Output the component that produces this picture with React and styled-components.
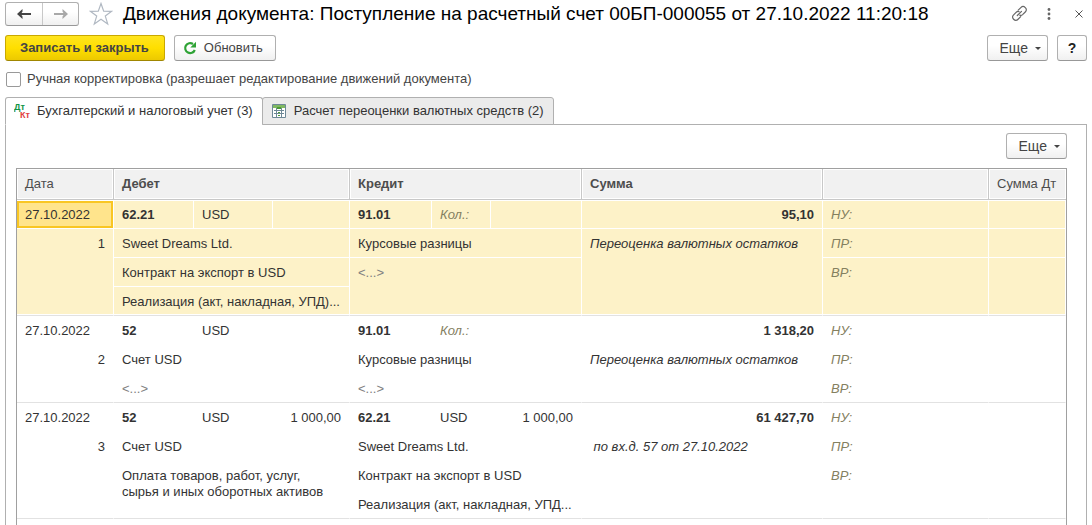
import React, { useState } from "react";
import styled, { createGlobalStyle, css } from "styled-components";

const entries = [
  {
    date: "27.10.2022",
    rows: 4,
    debit: { account: "62.21", unit: "USD", lines: ["Sweet Dreams Ltd.", "Контракт на экспорт в USD", "Реализация (акт, накладная, УПД)..."] },
    credit: { account: "91.01", lines: ["Курсовые разницы", "<...>"] },
    sum: "95,10",
    comment: "Переоценка валютных остатков",
  },
  {
    date: "27.10.2022",
    rows: 3,
    debit: { account: "52", unit: "USD", lines: ["Счет USD", "<...>"] },
    credit: { account: "91.01", lines: ["Курсовые разницы", "<...>"] },
    sum: "1 318,20",
    comment: "Переоценка валютных остатков",
  },
  {
    date: "27.10.2022",
    rows: 4,
    debit: { account: "52", unit: "USD", amount: "1 000,00", lines: ["Счет USD", "Оплата товаров, работ, услуг,\nсырья и иных оборотных активов"] },
    credit: { account: "62.21", unit: "USD", amount: "1 000,00", lines: ["Sweet Dreams Ltd.", "Контракт на экспорт в USD", "Реализация (акт, накладная, УПД..."] },
    sum: "61 427,70",
    comment: "\u00a0по вх.д. 57 от 27.10.2022",
  },
];

const taxLines = ["ПР:", "ВР:"];

// the last line of a list takes all the rows that are left
const spanOf = (lines, index, rows) =>
  index === lines.length - 1 ? rows - 1 - index : 1;

const ArrowIcon = ({ back }) => (
  <svg width="14" height="10" viewBox="0 0 14 10" fill="currentColor">
    {back ? <path d="M0 5L5.500 0v2.500L4.500 4H14v2H4.500l1 1.500V10z" /> : <path d="M14 5L8.500 0v2.500l1 1.500H0v2h9.500l-1 1.500V10z" />}
  </svg>
);

const StarIcon = () => (
  <svg width="24" height="24" viewBox="0 0 24 24" fill="none" stroke="#b0b8c2" strokeWidth="1.200">
    <path d="M12 1.500l2.700 7.600 8 .2-6.400 4.800 2.400 7.800L12 17.200l-6.700 4.700 2.400-7.800L1.300 9.300l8-.2z" />
  </svg>
);

const RefreshIcon = () => (
  <svg width="14" height="14" viewBox="0 0 14 14" fill="none">
    <path d="M10 3A5 5 0 1 0 11.800 9" stroke="#2fa336" strokeWidth="2.200" />
    <path d="M13 .8v5.700H7.300z" fill="#2fa336" />
  </svg>
);

const PostingIcon = () => (
  <svg width="18" height="16" viewBox="0 0 18 16" fontFamily="Liberation Sans, sans-serif" fontSize="9" fontWeight="700">
    <text x="0" y="7" fill="#0f9445">Дт</text>
    <text x="6" y="15" fill="#e0413f">Кт</text>
  </svg>
);

const RegisterIcon = () => (
  <svg width="14" height="14" viewBox="0 0 14 14">
    <path d="M.5.5h13v13H.5z" fill="#fff" stroke="#6d8896" />
    <path d="M1 1h12v3H1z" fill="#7fb862" />
    <path d="M2 6.500h10M2 9.500h10M4.500 4v9M9.500 4v9" stroke="#6d8896" />
    <path d="M5 3h4v2H5zM6 8h2v1H6zM6 11h2v1H6z" fill="#4c9a35" />
  </svg>
);

const LinkIcon = () => (
  <svg width="17" height="17" viewBox="0 0 17 17" fill="none" stroke="#666" strokeWidth="1.200" strokeLinecap="round">
    <path d="M7.200 5.200l2.900-2.900a2.700 2.700 0 0 1 3.900 0l.5.500a2.700 2.700 0 0 1 0 3.900l-2.900 2.900a2.700 2.700 0 0 1-2.800.5" />
    <path d="M9.700 11.600l-2.900 2.900a2.700 2.700 0 0 1-3.900 0l-.5-.5a2.700 2.700 0 0 1 0-3.900l2.900-2.900a2.700 2.700 0 0 1 2.800-.5" />
    <path d="M6.300 10.500l4.200-4.200" />
  </svg>
);

const DotsIcon = () => (
  <svg width="4" height="12" viewBox="0 0 4 12" fill="#666">
    <circle cx="2" cy="1.500" r="1.400" />
    <circle cx="2" cy="6" r="1.400" />
    <circle cx="2" cy="10.500" r="1.400" />
  </svg>
);

const CloseIcon = () => (
  <svg width="8" height="8" viewBox="0 0 8 8" stroke="#555" strokeWidth="1">
    <path d="M.5.500l7 7M7.500.500l-7 7" />
  </svg>
);

const MoreButton = () => (
  <Button $more type="button">
    Еще
    <Caret />
  </Button>
);

const DetailCell = ({ text, ...rest }) => (
  <Cell colSpan={3} $muted={text === "<...>"} {...rest}>{text}</Cell>
);

const Entry = ({ entry, number, active }) => {
  const { debit, credit, rows } = entry;

  // row span of a line and whether it touches the bottom of the entry
  const place = (lines, i) => {
    const rowSpan = spanOf(lines, i, rows);
    return { rowSpan, $last: i + rowSpan === rows - 1 };
  };

  return (
    <EntryBody $active={active}>
      <tr>
        <Cell $first $selected={active}>{entry.date}</Cell>
        <Cell $first $bold>{debit.account}</Cell>
        <Cell $first>{debit.unit}</Cell>
        <Cell $first $right>{debit.amount}</Cell>
        <Cell $first $bold>{credit.account}</Cell>
        {credit.unit ? <Cell $first>{credit.unit}</Cell> : <Cell $first $hint>Кол.:</Cell>}
        <Cell $first $right>{credit.amount}</Cell>
        <Cell $first $bold $right>{entry.sum}</Cell>
        <Cell $first $hint>НУ:</Cell>
        <Cell $first />
      </tr>
      {Array.from({ length: rows - 1 }, (_, i) => (
        <tr key={i}>
          {i === 0 && <Cell $right $last rowSpan={rows - 1}>{number}</Cell>}
          {i < debit.lines.length && <DetailCell text={debit.lines[i]} {...place(debit.lines, i)} />}
          {i < credit.lines.length && <DetailCell text={credit.lines[i]} {...place(credit.lines, i)} />}
          {i === 0 && <Cell $italic $last rowSpan={rows - 1}>{entry.comment}</Cell>}
          {i < taxLines.length && (
            <>
              <Cell $hint {...place(taxLines, i)}>{taxLines[i]}</Cell>
              <Cell {...place(taxLines, i)} />
            </>
          )}
        </tr>
      ))}
    </EntryBody>
  );
};

const App = () => {
  const [manual, setManual] = useState(false);
  const [tab, setTab] = useState(0);

  return (
    <Page>
      <GlobalStyle />
      <Header>
        <NavGroup>
          <NavButton type="button" aria-label="Назад"><ArrowIcon back /></NavButton>
          <NavButton type="button" aria-label="Вперед" $dim><ArrowIcon /></NavButton>
        </NavGroup>
        <IconButton type="button" aria-label="В избранное"><StarIcon /></IconButton>
        <Title>Движения документа: Поступление на расчетный счет 00БП-000055 от 27.10.2022 11:20:18</Title>
        <WindowActions>
          <IconButton $small type="button" aria-label="Ссылка"><LinkIcon /></IconButton>
          <IconButton $small type="button" aria-label="Меню"><DotsIcon /></IconButton>
          <IconButton $small type="button" aria-label="Закрыть"><CloseIcon /></IconButton>
        </WindowActions>
      </Header>

      <Toolbar>
        <Button $primary type="button">Записать и закрыть</Button>
        <Button type="button">
          <RefreshIcon />
          Обновить
        </Button>
        <Spacer />
        <MoreButton />
        <HelpButton type="button">?</HelpButton>
      </Toolbar>

      <CheckRow>
        <Checkbox id="manual" type="checkbox" checked={manual} onChange={e => setManual(e.target.checked)} />
        <label htmlFor="manual">Ручная корректировка (разрешает редактирование движений документа)</label>
      </CheckRow>

      <Tabs role="tablist">
        <Tab type="button" role="tab" aria-selected={tab === 0} $active={tab === 0} onClick={() => setTab(0)}>
          <PostingIcon />
          Бухгалтерский и налоговый учет (3)
        </Tab>
        <Tab type="button" role="tab" aria-selected={tab === 1} $active={tab === 1} onClick={() => setTab(1)}>
          <RegisterIcon />
          Расчет переоценки валютных средств (2)
        </Tab>
      </Tabs>

      <Panel>
        <PanelBar>
          <MoreButton />
        </PanelBar>
        <TableBox>
          <Table>
            <colgroup>
              <Col $w={97} />
              <Col $w={80} />
              <Col $w={79} />
              <Col $w={77} />
              <Col $w={82} />
              <Col $w={59} />
              <Col $w={91} />
              <col />
              <Col $w={166} />
              <Col $w={77} />
            </colgroup>
            <thead>
              <tr>
                <HeadCell>Дата</HeadCell>
                <HeadCell $bold colSpan={3}>Дебет</HeadCell>
                <HeadCell $bold colSpan={3}>Кредит</HeadCell>
                <HeadCell $bold>Сумма</HeadCell>
                <HeadCell />
                <HeadCell>Сумма Дт</HeadCell>
              </tr>
            </thead>
            {entries.map((entry, i) => (
              <Entry key={i} entry={entry} number={i + 1} active={i === 0} />
            ))}
          </Table>
        </TableBox>
      </Panel>
    </Page>
  );
};

const GlobalStyle = createGlobalStyle`
  * {
    box-sizing: border-box;
  }

  body {
    margin: 0;
    background: #fff;
  }

  body, button, input {
    font-family: "Liberation Sans", Arial, sans-serif;
    font-size: 13px;
    line-height: 16px;
    color: #333;
  }
`;

const Page = styled.div`
  display: flex;
  flex-direction: column;
  min-height: 100vh;
  padding: 0 5px;
`;

const Header = styled.header`
  display: flex;
  align-items: center;
  height: 27px;
  gap: 10px;
`;

const raised = css`
  border: 1px solid #b0b0b0;
  border-bottom-color: #989898;
  border-radius: 3px;
  background: linear-gradient(#fff 40%, #f0f0f0);
`;

const NavGroup = styled.div`
  display: flex;
  flex: none;
  height: 24px;
  ${raised}
`;

const NavButton = styled.button`
  display: flex;
  align-items: center;
  justify-content: center;
  width: 36px;
  padding: 0;
  border: 0;
  background: none;
  color: ${p => (p.$dim ? "#a8a8a8" : "#444")};

  & + & {
    border-left: 1px solid #c8c8c8;
  }
`;

const IconButton = styled.button`
  display: flex;
  flex: none;
  justify-content: center;
  width: ${p => (p.$small ? 16 : 24)}px;
  padding: 0;
  border: 0;
  background: none;

  svg {
    flex: none;
  }
`;

const Title = styled.h1`
  flex: 1;
  margin: 0;
  font-size: 19px;
  line-height: 24px;
  font-weight: 400;
  color: #000;
  white-space: nowrap;
`;

const WindowActions = styled.div`
  display: flex;
  align-items: center;
  gap: 14px;
`;

const Toolbar = styled.div`
  display: flex;
  gap: 9px;
  margin-top: 8px;
`;

const Button = styled.button`
  display: flex;
  align-items: center;
  gap: 7px;
  height: 26px;
  padding: 0 12px 0 8px;
  color: #444;
  ${raised}

  ${p => p.$primary && css`
    padding: 0 15px 0 14px;
    font-weight: 700;
    border-color: #c9a800;
    border-bottom-color: #a08600;
    background: linear-gradient(#ffe51f, #ffdf00 50%, #ecc900);
  `}

  ${p => p.$more && css`
    padding: 0 6px 0 12px;
    font-size: 14px;
  `}
`;

const HelpButton = styled(Button)`
  justify-content: center;
  width: 30px;
  padding: 0;
  font-size: 14px;
  font-weight: 700;
  color: #222;
`;

const Caret = styled.span`
  border: 3px solid transparent;
  border-top-color: #444;
  border-bottom: 0;
`;

const Spacer = styled.div`
  flex: 1;
`;

const CheckRow = styled.div`
  display: flex;
  align-items: center;
  gap: 6px;
  height: 36px;
  padding-left: 1px;
  color: #444;
`;

const Checkbox = styled.input`
  appearance: none;
  width: 15px;
  height: 15px;
  margin: 0;
  border: 1px solid #999;
  border-radius: 2px;
  background: #fff;

  &:checked {
    background: #ffdf00;
  }
`;

const Tabs = styled.div`
  display: flex;
  z-index: 1;
`;

const Tab = styled.button`
  display: flex;
  align-items: center;
  gap: ${p => (p.$active ? 5 : 8)}px;
  height: 28px;
  padding: 0 9px;
  border: 1px solid #b0b0b0;
  border-bottom-color: ${p => (p.$active ? "#fff" : "#b0b0b0")};
  border-radius: 3px 3px 0 0;
  background: ${p => (p.$active ? "#fff" : "#ebebeb")};

  &:first-child {
    padding-left: 8px;
  }

  & + & {
    margin-left: -1px;
  }
`;

const Panel = styled.section`
  display: flex;
  flex: 1;
  flex-direction: column;
  margin-top: -1px;
  padding: 8px 19px 0 10px;
  border: 1px solid #b0b0b0;
  border-bottom: 0;
`;

const PanelBar = styled.div`
  display: flex;
  justify-content: flex-end;
  margin-bottom: 9px;
`;

const TableBox = styled.div`
  flex: 1;
  border: 1px solid #a0a0a0;
  border-bottom: 0;
`;

const Table = styled.table`
  width: 100%;
  table-layout: fixed;
  border-collapse: separate;
  border-spacing: 0;
`;

const Col = styled.col`
  width: ${p => p.$w}px;
`;

const HeadCell = styled.th`
  height: 31px;
  padding: 0 8px;
  border-right: 1px solid #c8c8c8;
  border-bottom: 1px solid #c8c8c8;
  background: #f1f1f1;
  box-shadow: inset 0 0 0 1px #fff;
  font-weight: ${p => (p.$bold ? 700 : 400)};
  text-align: left;
  color: #4d4d4d;
  white-space: nowrap;

  &:last-child {
    border-right: 0;
  }
`;

const Cell = styled.td`
  height: 29px;
  padding: 7px 8px 5px;
  border-right: 1px solid #fff;
  border-bottom: 1px solid ${p => (p.$last ? "#e2e2e2" : "#fff")};
  vertical-align: top;
  text-align: ${p => (p.$right ? "right" : "left")};
  font-weight: ${p => (p.$bold ? 700 : 400)};
  font-style: ${p => (p.$italic || p.$hint ? "italic" : "normal")};
  white-space: pre-line;
  ${p => p.$first && "box-shadow: inset 0 1px #fff;"}
  ${p => p.$last && "box-shadow: inset 0 -1px #fff;"}
  ${p => p.$hint && "color: #84805f;"}
  ${p => p.$muted && "color: #808080;"}

  ${p => p.$selected && css`
    background: #ffe48c;
    box-shadow: inset 0 1px #fff, inset 0 3px #f9c623, inset 0 0 0 2px #f9c623;
  `}
`;

const EntryBody = styled.tbody`
  background: ${p => (p.$active ? "#fdf2c8" : "#fff")};
`;

export default App;
